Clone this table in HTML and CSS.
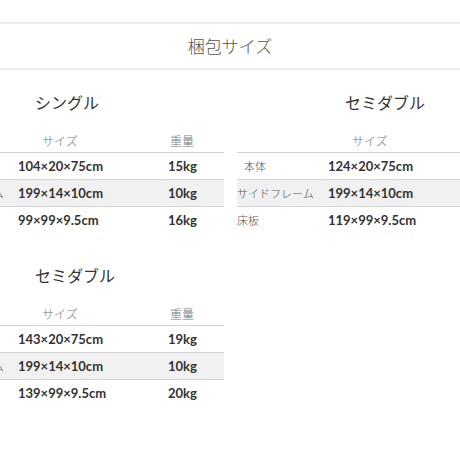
FILE: index.html
```html
<!DOCTYPE html>
<html lang="ja">
<head>
  <meta charset="UTF-8">
  <meta name="viewport" content="width=device-width, initial-scale=1.0">
  <title>梱包サイズ</title>
  <link rel="stylesheet" href="styles.css">
</head>
<body>

  <h2 class="title">梱包サイズ</h2>

  <div class="layout">
    <div class="column">
      <section class="pack">
        <h3>シングル</h3>
        <table>
          <thead>
            <tr><th class="name"></th><th class="size">サイズ</th><th class="weight">重量</th></tr>
          </thead>
          <tbody>
            <tr><td class="name">本体</td><td>104×20×75cm</td><td>15kg</td></tr>
            <tr class="alt"><td class="name">サイドフレーム</td><td>199×14×10cm</td><td>10kg</td></tr>
            <tr><td class="name">床板</td><td>99×99×9.5cm</td><td>16kg</td></tr>
          </tbody>
        </table>
      </section>

      <section class="pack">
        <h3>セミダブル</h3>
        <table>
          <thead>
            <tr><th class="name"></th><th class="size">サイズ</th><th class="weight">重量</th></tr>
          </thead>
          <tbody>
            <tr><td class="name">本体</td><td>143×20×75cm</td><td>19kg</td></tr>
            <tr class="alt"><td class="name">サイドフレーム</td><td>199×14×10cm</td><td>10kg</td></tr>
            <tr><td class="name">床板</td><td>139×99×9.5cm</td><td>20kg</td></tr>
          </tbody>
        </table>
      </section>
    </div>

    <div class="column">
      <section class="pack">
        <h3>セミダブル</h3>
        <table>
          <thead>
            <tr><th class="name"></th><th class="size">サイズ</th><th class="weight">重量</th></tr>
          </thead>
          <tbody>
            <tr><td class="name indent">本体</td><td>124×20×75cm</td><td>21kg</td></tr>
            <tr class="alt"><td class="name">サイドフレーム</td><td>199×14×10cm</td><td>10kg</td></tr>
            <tr><td class="name">床板</td><td>119×99×9.5cm</td><td>18kg</td></tr>
          </tbody>
        </table>
      </section>
    </div>
  </div>

</body>
</html>
```

FILE: styles.css
```css
body {
  margin: 0;
  padding-top: 22px;
  background-color: #fff;
  color: #333;
  font-family: Lato, "Noto Sans CJK JP", sans-serif;
  overflow: hidden;
}

.title {
  margin: 0;
  height: 44px;
  line-height: 46px;
  border-top: 2px solid #ebebeb;
  border-bottom: 2px solid #ebebeb;
  text-align: center;
  font-size: 17px;
  font-weight: 300;
  color: #555;
}

.layout {
  display: flex;
  gap: 13px;
  margin-left: -73px;
  width: 607px;
}

.column {
  width: 297px;
  flex-shrink: 0;
}

.pack {
  padding-top: 21px;
  margin-bottom: 10px;
}

.pack h3 {
  margin: 0 0 14px;
  padding-left: 108px;
  height: 24px;
  line-height: 24px;
  font-size: 16px;
  font-weight: 400;
  color: #333;
}

table {
  width: 297px;
  border-collapse: collapse;
  table-layout: fixed;
}

th {
  height: 23px;
  padding: 0 0 0 5px;
  text-align: left;
  font-size: 12px;
  font-weight: 300;
  color: #777;
  border-bottom: 1px solid #d4d4d4;
}

th.name {
  width: 81px;
}

th.size {
  width: 121px;
  padding-left: 29px;
}

th.weight {
  padding-left: 7px;
}

td {
  height: 26px;
  padding: 0 0 0 5px;
  font-size: 13px;
  font-weight: 700;
  color: #333;
  border-bottom: 1px solid #d4d4d4;
}

td.name {
  padding-left: 0;
  font-size: 11px;
  font-weight: 300;
  color: #555;
}

td.indent {
  padding-left: 7px;
}

tbody tr:last-child td {
  border-bottom: none;
}

tr.alt {
  background-color: #f1f1f1;
}
```
